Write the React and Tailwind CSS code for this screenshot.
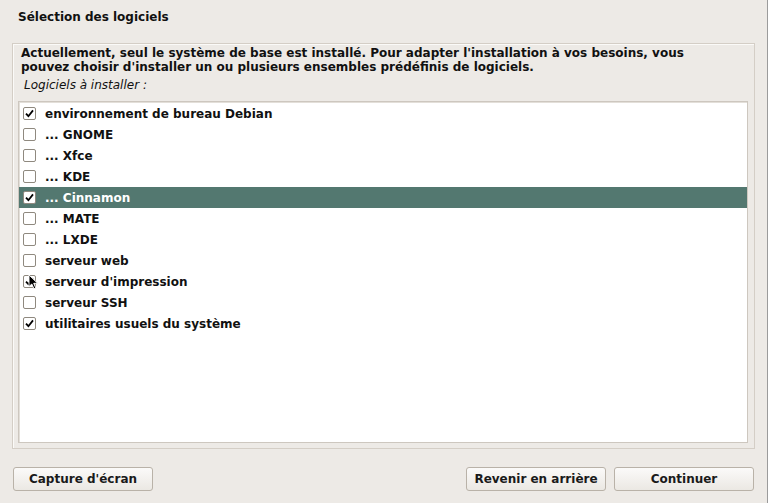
import React from "react";

const items = [
  { label: "environnement de bureau Debian", checked: true },
  { label: "... GNOME", checked: false },
  { label: "... Xfce", checked: false },
  { label: "... KDE", checked: false },
  { label: "... Cinnamon", checked: true, selected: true },
  { label: "... MATE", checked: false },
  { label: "... LXDE", checked: false },
  { label: "serveur web", checked: false },
  { label: "serveur d'impression", checked: true, cursor: true },
  { label: "serveur SSH", checked: false },
  { label: "utilitaires usuels du système", checked: true },
];

function Check({ checked }) {
  return (
    <span className="w-[13px] h-[13px] shrink-0 rounded-[2px] border border-[#8f897f] bg-white flex items-center justify-center">
      {checked && (
        <svg width="9" height="9" viewBox="0 0 9 9">
          <path d="M1 4.6 L3.4 7.2 L8 1.4" fill="none" stroke="#000" strokeWidth="1.8" />
        </svg>
      )}
    </span>
  );
}

function Cursor() {
  return (
    <svg className="absolute left-[9px] top-[3px]" width="11" height="16" viewBox="0 0 11 16">
      <path d="M1 1 L1 12.5 L3.8 10 L6 14.8 L7.8 14 L5.7 9.3 L9.6 9.3 Z" fill="#000" stroke="#fff" strokeWidth="0.9" />
    </svg>
  );
}

function Button({ children, className }) {
  return (
    <button
      className={
        "h-[24px] rounded-[3px] border border-[#b9b2a8] bg-gradient-to-b from-[#fbfaf9] to-[#ebe8e3] text-[12px] font-bold text-[#1a1a1a] " +
        className
      }
    >
      {children}
    </button>
  );
}

export default function App() {
  return (
    <div
      className="w-[768px] h-[503px] bg-[#edeae6] border-r border-[#9b9b9b] flex flex-col text-[#111]"
      style={{ fontFamily: '"DejaVu Sans", Verdana, sans-serif' }}
    >
      <div className="h-[43px] pt-[10px] pl-[18px] text-[12px] leading-[15px] font-bold">
        Sélection des logiciels
      </div>

      <div className="mx-[12px] h-[406px] border border-[#d4cec6] shadow-[inset_1px_1px_0_#fbfaf8] flex flex-col pl-[5px] pr-[6px] pb-[5px]">
        <div className="pl-[3px] pt-[3px] text-[12px] leading-[13.5px] font-bold">
          <p>Actuellement, seul le système de base est installé. Pour adapter l'installation à vos besoins, vous</p>
          <p>pouvez choisir d'installer un ou plusieurs ensembles prédéfinis de logiciels.</p>
        </div>
        <p className="pl-[6px] mt-[4px] text-[12px] leading-[14px] italic">Logiciels à installer :</p>

        <div className="mt-[9px] flex-1 bg-white border border-[#cdc7bf] shadow-[inset_1px_1px_0_#e3dfd9] pt-[1px]">
          {items.map((it) => (
            <div
              key={it.label}
              className={
                "relative h-[21px] flex items-center gap-[9px] pl-[4px] text-[12px] font-bold " +
                (it.selected ? "bg-[#537870] text-white" : "")
              }
            >
              <Check checked={it.checked} />
              <span>{it.label}</span>
              {it.cursor && <Cursor />}
            </div>
          ))}
        </div>
      </div>

      <div className="flex items-center px-[13px] mt-[18px]">
        <Button className="w-[140px]">Capture d'écran</Button>
        <div className="flex-1" />
        <Button className="w-[140px]">Revenir en arrière</Button>
        <Button className="w-[140px] ml-[8px]">Continuer</Button>
      </div>
    </div>
  );
}
